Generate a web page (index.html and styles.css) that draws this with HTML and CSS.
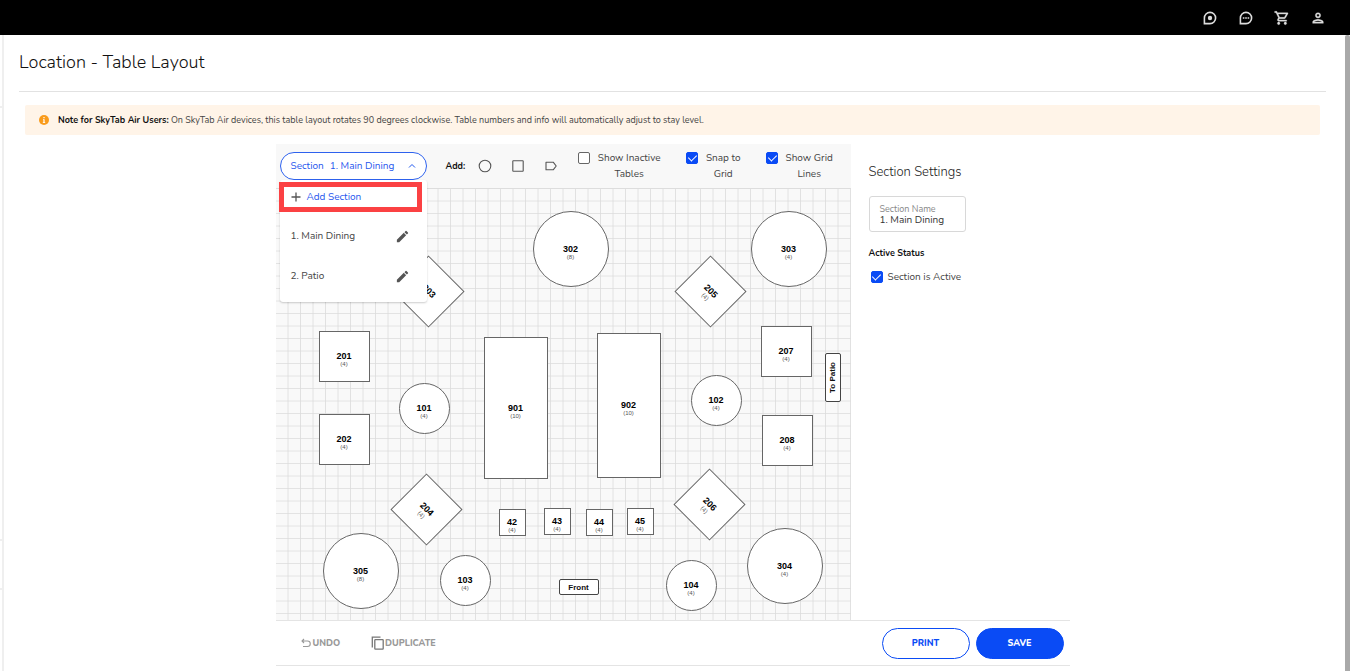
FILE: index.html
```html
<!DOCTYPE html>
<html lang="en">

<head>
    <meta charset="UTF-8">
    <meta name="viewport" content="width=device-width, initial-scale=1.0">
    <title>Location - Table Layout</title>
    <link rel="stylesheet" href="styles.css">
</head>

<body>

    <header class="topbar">
        <button type="button" class="icon-btn" aria-label="Updates">
            <svg viewBox="0 0 16 16"><path d="M2.4 13.6V8A5.6 5.6 0 1 1 8 13.6Z" fill="none" stroke="currentColor" stroke-width="1.6"/><circle cx="8" cy="8" r="2.2" fill="currentColor"/></svg>
        </button>
        <button type="button" class="icon-btn" aria-label="Chat">
            <svg viewBox="0 0 16 16"><path d="M2.4 13.6V8A5.6 5.6 0 1 1 8 13.6Z" fill="none" stroke="currentColor" stroke-width="1.6"/><path d="M4.8 7.3h1.6v1.4H4.8zM7.2 7.3h1.6v1.4H7.2zM9.6 7.3h1.6v1.4H9.6z" fill="currentColor"/></svg>
        </button>
        <button type="button" class="icon-btn" aria-label="Cart">
            <svg viewBox="0 0 24 24"><path fill="currentColor" stroke="currentColor" stroke-width=".5" d="M15.55 13c.75 0 1.41-.41 1.75-1.03l3.58-6.49A.996.996 0 0 0 20.01 4H5.21l-.94-2H1v2h2l3.6 7.59-1.35 2.44C4.52 15.37 5.48 17 7 17h12v-2H7l1.1-2h7.45zM6.16 6h12.15l-2.76 5H8.53L6.16 6zM7 18c-1.1 0-1.99.9-1.99 2S5.9 22 7 22s2-.9 2-2-.9-2-2-2zm10 0c-1.1 0-1.99.9-1.99 2s.89 2 1.99 2 2-.9 2-2-.9-2-2-2z"/></svg>
        </button>
        <button type="button" class="icon-btn" aria-label="Account">
            <svg viewBox="0 0 24 24"><path fill="currentColor" stroke="currentColor" stroke-width=".5" d="M12 6a2 2 0 1 1 0 4 2 2 0 0 1 0-4m0 10c2.7 0 5.8 1.29 6 2H6c.23-.72 3.31-2 6-2m0-12a4 4 0 1 0 0 8 4 4 0 0 0 0-8zm0 10c-2.67 0-8 1.34-8 4v2h16v-2c0-2.66-5.33-4-8-4z"/></svg>
        </button>
    </header>

    <div class="shell">
        <aside class="rail">
            <div class="rail-block rail-first"></div>
            <div class="rail-block rail-middle"></div>
            <div class="rail-block rail-last"></div>
        </aside>

        <main class="page">
            <h1 class="page-title">Location - Table Layout</h1>

            <div class="note">
                <svg class="note-icon" viewBox="0 0 10 10"><circle cx="5" cy="5" r="5" fill="#f99b1c"/><path d="M4.4 2h1.2v1.2H4.4zM4 4.2h1.6v3H6.2v.8H3.8v-.8h.6V5H4z" fill="#fff"/></svg>
                <p><strong>Note for SkyTab Air Users:</strong> On SkyTab Air devices, this table layout rotates 90 degrees clockwise. Table numbers and info will automatically adjust to stay level.</p>
            </div>

            <div class="workspace">
                <section class="editor">
                    <div class="toolbar">
                        <div class="picker">
                            <button type="button" class="picker-toggle" aria-expanded="true">
                                <span>Section</span>
                                <span>1. Main Dining</span>
                                <svg class="chevron" viewBox="0 0 8 8"><path d="M1 5.5 4 2.5 7 5.5" fill="none" stroke="currentColor"/></svg>
                            </button>
                            <div class="picker-menu">
                                <button type="button" class="add-section">
                                    <svg viewBox="0 0 10 10"><path d="M5 0.5v9M0.5 5h9" stroke="#555" stroke-width="1.3"/></svg>
                                    Add Section
                                </button>
                                <ul class="picker-list">
                                    <li>
                                        <span>1. Main Dining</span>
                                        <button type="button" class="edit-btn" aria-label="Edit Main Dining">
                                            <svg viewBox="0 0 24 24"><path fill="currentColor" d="M3 17.25V21h3.75L17.81 9.94l-3.75-3.75L3 17.25zM20.71 7.04a1 1 0 0 0 0-1.41l-2.34-2.34a1 1 0 0 0-1.41 0l-1.83 1.83 3.75 3.75 1.83-1.83z"/></svg>
                                        </button>
                                    </li>
                                    <li>
                                        <span>2. Patio</span>
                                        <button type="button" class="edit-btn" aria-label="Edit Patio">
                                            <svg viewBox="0 0 24 24"><path fill="currentColor" d="M3 17.25V21h3.75L17.81 9.94l-3.75-3.75L3 17.25zM20.71 7.04a1 1 0 0 0 0-1.41l-2.34-2.34a1 1 0 0 0-1.41 0l-1.83 1.83 3.75 3.75 1.83-1.83z"/></svg>
                                        </button>
                                    </li>
                                </ul>
                            </div>
                        </div>

                        <div class="add-tools">
                            <strong>Add:</strong>
                            <button type="button" class="shape-btn" aria-label="Add round table">
                                <svg viewBox="0 0 14 14"><circle cx="7" cy="7" r="5.8"/></svg>
                            </button>
                            <button type="button" class="shape-btn" aria-label="Add square table">
                                <svg viewBox="0 0 14 14"><rect x="1.8" y="1.8" width="10.4" height="10.4" rx=".5"/></svg>
                            </button>
                            <button type="button" class="shape-btn" aria-label="Add label">
                                <svg viewBox="0 0 14 14"><path d="M2 3.2h7.2L12.2 7l-3 3.8H2z" stroke-linejoin="round"/></svg>
                            </button>
                        </div>

                        <label class="check check-wide"><input type="checkbox"><span>Show Inactive Tables</span></label>
                        <label class="check check-narrow"><input type="checkbox" checked><span>Snap to Grid</span></label>
                        <label class="check check-medium"><input type="checkbox" checked><span>Show Grid Lines</span></label>
                    </div>

                    <div class="floor">
                        <svg class="grid-lines">
                            <defs>
                                <pattern id="grid" width="12.5" height="12.5" patternUnits="userSpaceOnUse">
                                    <path d="M12.5 0V12.5H0" fill="none" stroke="#dcdcdc" stroke-width="1.6"/>
                                </pattern>
                            </defs>
                            <rect width="100%" height="100%" fill="url(#grid)"/>
                        </svg>

                        <div class="table round-lg t302"><b>302</b><small>(8)</small></div>
                        <div class="table round-lg t303"><b>303</b><small>(4)</small></div>
                        <div class="table round-lg t304"><b>304</b><small>(4)</small></div>
                        <div class="table round-lg t305"><b>305</b><small>(8)</small></div>

                        <div class="table round t101"><b>101</b><small>(4)</small></div>
                        <div class="table round t102"><b>102</b><small>(4)</small></div>
                        <div class="table round t103"><b>103</b><small>(4)</small></div>
                        <div class="table round t104"><b>104</b><small>(4)</small></div>

                        <div class="table square t201"><b>201</b><small>(4)</small></div>
                        <div class="table square t202"><b>202</b><small>(4)</small></div>
                        <div class="table square t207"><b>207</b><small>(4)</small></div>
                        <div class="table square t208"><b>208</b><small>(4)</small></div>

                        <div class="table diamond t203"><b>203</b><small>(4)</small></div>
                        <div class="table diamond t204"><b>204</b><small>(4)</small></div>
                        <div class="table diamond t205"><b>205</b><small>(4)</small></div>
                        <div class="table diamond t206"><b>206</b><small>(4)</small></div>

                        <div class="table long t901"><b>901</b><small>(10)</small></div>
                        <div class="table long t902"><b>902</b><small>(10)</small></div>

                        <div class="table mini t42"><b>42</b><small>(4)</small></div>
                        <div class="table mini t43"><b>43</b><small>(4)</small></div>
                        <div class="table mini t44"><b>44</b><small>(4)</small></div>
                        <div class="table mini t45"><b>45</b><small>(4)</small></div>

                        <div class="tag tag-front">Front</div>
                        <div class="tag tag-patio">To Patio</div>
                    </div>
                </section>

                <section class="settings">
                    <h2>Section Settings</h2>
                    <div class="field">
                        <label for="sectionName">Section Name</label>
                        <input type="text" id="sectionName" value="1. Main Dining">
                    </div>
                    <h3>Active Status</h3>
                    <label class="check check-active"><input type="checkbox" checked><span>Section is Active</span></label>
                </section>

                <div class="actions">
                    <button type="button" class="text-btn undo">
                        <svg class="undo-icon" viewBox="0 0 10 10"><path d="M3 1 1 3l2 2M1 3h5.5a2.7 2.7 0 0 1 0 5.5H2" fill="none" stroke="#999" stroke-width="1.1"/></svg>
                        UNDO
                    </button>
                    <button type="button" class="text-btn">
                        <svg class="copy-icon" viewBox="0 0 14 14"><path d="M1.3 11.5V1.2h8.2" fill="none" stroke="#777" stroke-width="1.3"/><rect x="3.8" y="3.6" width="8.4" height="9.6" rx=".6" fill="none" stroke="#777" stroke-width="1.3"/></svg>DUPLICATE
                    </button>
                    <button type="button" class="pill pill-outline">PRINT</button>
                    <button type="button" class="pill pill-solid">SAVE</button>
                </div>
            </div>
        </main>

        <div class="scrollbar"></div>
    </div>

</body>

</html>
```
FILE: styles.css
```css
* {
    box-sizing: border-box;
}

body {
    margin: 0;
    min-height: 100vh;
    display: flex;
    flex-direction: column;
    font-family: Nunito, Lato, sans-serif;
    font-size: 10px;
    color: #444;
    background-color: #fff;
}

button {
    padding: 0;
    border: none;
    background: none;
    font: inherit;
    color: inherit;
    cursor: pointer;
}

svg {
    display: block;
}

h1,
h2,
h3,
p,
ul {
    margin: 0;
    padding: 0;
}

/* top bar */
.topbar {
    display: flex;
    justify-content: flex-end;
    align-items: center;
    gap: 20px;
    height: 35px;
    padding-right: 24px;
    background-color: #000;
    color: #ddd;
}

.icon-btn svg {
    width: 16px;
    height: 16px;
}

.shell {
    flex: 1;
    display: flex;
}

.rail {
    width: 4px;
    border-right: 2px solid #efefef;
}

.rail-block {
    border-bottom: 2px solid #efefef;
}

.rail-first {
    height: 73px;
}

.rail-middle {
    height: 433px;
}

.rail-last {
    height: 49px;
}

.scrollbar {
    width: 5px;
    background-color: #a9a9a9;
    border-radius: 2px 2px 0 0;
}

/* page */
.page {
    flex: 1;
    padding: 0 19px 0 15px;
}

.page-title {
    padding: 14px 0 16px;
    border-bottom: 1px solid #e2e2e2;
    font-size: 18px;
    line-height: 26px;
    font-weight: 300;
    color: #111;
}

.note {
    display: flex;
    align-items: center;
    gap: 9px;
    margin: 13px 6px 9px;
    padding: 8px 14px;
    border-radius: 2px;
    background-color: #fff4e8;
    font-size: 9px;
    line-height: 14px;
}

.note strong {
    color: #111;
}

.note-icon {
    width: 10px;
    height: 10px;
}

.workspace {
    display: grid;
    grid-template-columns: minmax(0, 575px) 1fr;
    max-width: 794px;
    margin: 0 auto;
}

/* toolbar */
.toolbar {
    display: flex;
    align-items: flex-start;
    height: 45px;
    padding: 6px 4px 0;
    border-bottom: 1px solid #ddd;
    background-color: #f8f8f8;
}

.picker {
    position: relative;
    width: 147px;
    margin-top: 2px;
}

.picker-toggle {
    display: flex;
    align-items: center;
    gap: 6px;
    width: 100%;
    height: 28px;
    padding: 0 10px;
    border: 1px solid #2e62ee;
    border-radius: 14px;
    background-color: #fff;
    color: #1f57ee;
    white-space: nowrap;
}

.chevron {
    width: 8px;
    height: 8px;
    margin-left: auto;
}

.picker-menu {
    position: absolute;
    top: 28px;
    left: 0;
    z-index: 2;
    width: 100%;
    padding: 2px 0 6px;
    background-color: #fff;
    border-radius: 3px;
    box-shadow: 0 1px 2px rgba(0, 0, 0, 0.2);
}

.add-section {
    display: flex;
    align-items: center;
    gap: 6px;
    width: 143px;
    height: 30px;
    margin-left: -1px;
    padding: 0 7px;
    border: 5px solid #fb4143;
    color: #1f57ee;
}

.add-section svg {
    width: 10px;
    height: 10px;
}

.picker-list {
    list-style: none;
    padding-top: 4px;
}

.picker-list li {
    display: flex;
    justify-content: space-between;
    align-items: center;
    height: 40px;
    padding: 0 17px 0 11px;
}

.edit-btn svg {
    width: 15px;
    height: 15px;
    color: #555;
}

.add-tools {
    display: flex;
    align-items: center;
    gap: 19px;
    height: 28px;
    margin: 2px 0 0 19px;
    font-size: 9px;
    color: #111;
}

.add-tools strong {
    margin-right: -6px;
}

.shape-btn svg {
    width: 14px;
    height: 14px;
    fill: none;
    stroke: #555;
    stroke-width: 1.1;
}

/* checkboxes */
.check {
    display: flex;
    align-items: flex-start;
    gap: 5px;
    line-height: 16px;
    text-align: center;
}

.check span {
    flex: 1;
}

.check input {
    appearance: none;
    display: grid;
    place-items: center;
    width: 12px;
    height: 12px;
    margin: 2px 0 0;
    border: 1px solid #666;
    border-radius: 2px;
    background-color: #fff;
}

.check input:checked {
    border-color: #0a4bf5;
    background-color: #0a4bf5;
}

.check input:checked::after {
    content: "";
    width: 4px;
    height: 7px;
    margin-bottom: 2px;
    border: solid #fff;
    border-width: 0 1px 1px 0;
    transform: rotate(45deg);
}

.check-wide {
    width: 85px;
    margin-left: 20px;
}

.check-narrow {
    width: 57px;
    margin-left: 23px;
}

.check-medium {
    width: 69px;
    margin-left: 23px;
}

/* floor plan */
.floor {
    position: relative;
    height: 431px;
    overflow: hidden;
    background-color: #f9f9f9;
}

.grid-lines {
    width: 100%;
    height: 100%;
}

.table {
    position: absolute;
    display: flex;
    flex-direction: column;
    align-items: center;
    justify-content: center;
    padding-top: 7px;
    border: 1px solid #666;
    background-color: #fff;
    font-family: "Liberation Sans", Arial, sans-serif;
    line-height: 8px;
}

.table b {
    font-size: 9px;
    color: #000;
}

.table small {
    font-size: 6px;
    color: #555;
}

.round-lg {
    width: 76px;
    height: 76px;
    border-radius: 50%;
}

.round {
    width: 51px;
    height: 51px;
    border-radius: 50%;
}

.square {
    width: 51px;
    height: 51px;
}

.diamond {
    width: 51px;
    height: 51px;
    transform: rotate(45deg);
}

.long {
    width: 64px;
    height: 142px;
}

.mini {
    width: 27px;
    height: 27px;
}

.t302 { left: 257px; top: 22px; }
.t303 { left: 475px; top: 22px; }
.t304 { left: 471px; top: 339px; }
.t305 { left: 47px; top: 344px; }
.t101 { left: 123px; top: 194px; }
.t102 { left: 415px; top: 186px; }
.t103 { left: 164px; top: 366px; }
.t104 { left: 390px; top: 371px; }
.t201 { left: 43px; top: 142px; }
.t202 { left: 43px; top: 225px; }
.t207 { left: 485px; top: 137px; }
.t208 { left: 486px; top: 226px; }
.t203 { left: 127px; top: 77px; }
.t204 { left: 125px; top: 295px; }
.t205 { left: 409px; top: 77px; }
.t206 { left: 408px; top: 290px; }
.t901 { left: 208px; top: 148px; }
.t902 { left: 321px; top: 144px; height: 145px; }
.t42 { left: 223px; top: 320px; }
.t43 { left: 268px; top: 319px; }
.t44 { left: 310px; top: 320px; }
.t45 { left: 351px; top: 319px; }

.tag {
    position: absolute;
    display: flex;
    align-items: center;
    justify-content: center;
    border: 1px solid #444;
    border-radius: 2px;
    background-color: #fff;
    font-family: "Liberation Sans", Arial, sans-serif;
    font-size: 8px;
    font-weight: bold;
    color: #111;
}

.tag-front {
    left: 283px;
    top: 390px;
    width: 40px;
    height: 16px;
}

.tag-patio {
    left: 549px;
    top: 164px;
    width: 16px;
    height: 49px;
    writing-mode: sideways-lr;
}

/* section settings */
.settings {
    padding: 18px 0 0 18px;
}

.settings h2 {
    font-size: 13px;
    line-height: 20px;
    font-weight: 300;
    color: #222;
}

.field {
    display: flex;
    flex-direction: column;
    width: 97px;
    height: 36px;
    margin: 14px 0;
    padding: 7px 10px 0;
    border: 1px solid #d8d8d8;
    border-radius: 3px;
}

.field label {
    font-size: 9px;
    line-height: 10px;
    color: #888;
}

.field input {
    width: 100%;
    height: 12px;
    padding: 0;
    border: none;
    outline: none;
    background: none;
    font: inherit;
    color: #333;
}

.settings h3 {
    margin-bottom: 9px;
    font-size: 9px;
    line-height: 14px;
    color: #111;
}

.check-active {
    margin-left: 2px;
    text-align: left;
}

/* bottom actions */
.actions {
    grid-column: 1 / -1;
    display: flex;
    align-items: center;
    height: 46px;
    padding: 0 6px 0 25px;
    border-top: 1px solid #e4e4e4;
    border-bottom: 1px solid #e4e4e4;
    font-size: 9px;
    font-weight: 800;
}

.text-btn {
    display: flex;
    align-items: center;
    color: #999;
}

.undo {
    gap: 2px;
    margin-right: 31px;
}

.undo-icon {
    width: 10px;
    height: 10px;
}

.copy-icon {
    width: 14px;
    height: 14px;
}

.pill {
    width: 88px;
    height: 31px;
    border: 1px solid #0a4bf5;
    border-radius: 16px;
}

.pill-outline {
    margin-left: auto;
    margin-right: 6px;
    color: #0a4bf5;
}

.pill-solid {
    background-color: #0a4bf5;
    color: #fff;
}
```
